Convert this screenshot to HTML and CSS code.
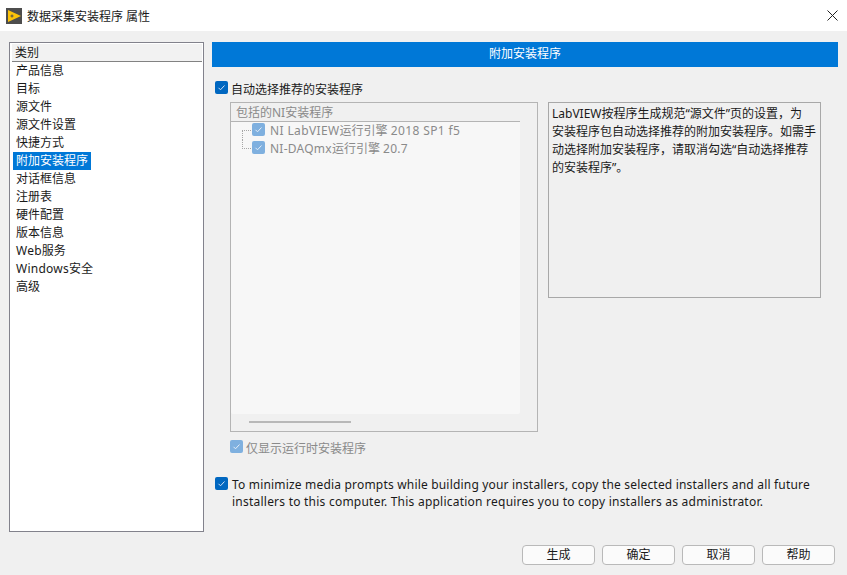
FILE: index.html
```html
<!DOCTYPE html>
<html lang="zh">
<head>
<meta charset="utf-8">
<title>数据采集安装程序 属性</title>
<link rel="stylesheet" href="styles.css">
</head>
<body>
<div class="window">
  <header class="titlebar">
    <svg class="app-icon" viewBox="0 0 16 16"><rect width="16" height="16" fill="#4d4d4d"/><path d="M2 2 L15 8 L2 14 Z" fill="#fcc30a"/><path d="M4.5 8h3M6 6.5v3" stroke="#4d4d4d" stroke-width="1" fill="none"/></svg>
    <span class="title">数据采集安装程序 属性</span>
    <svg class="close" viewBox="0 0 11 11"><path d="M.5 .5L10.5 10.5M10.5 .5L.5 10.5" stroke="#222" stroke-width="1" fill="none"/></svg>
  </header>
  <main class="content">
    <nav class="categories">
      <div class="cat-head">类别</div>
      <ul class="cat-list">
        <li>产品信息</li>
        <li>目标</li>
        <li>源文件</li>
        <li>源文件设置</li>
        <li>快捷方式</li>
        <li><span class="selected">附加安装程序</span></li>
        <li>对话框信息</li>
        <li>注册表</li>
        <li>硬件配置</li>
        <li>版本信息</li>
        <li><span class="lat">Web</span>服务</li>
        <li><span class="lat">Windows</span>安全</li>
        <li>高级</li>
      </ul>
    </nav>
    <section class="panel">
      <h1 class="panel-title">附加安装程序</h1>
      <label class="check auto">
        <span class="box"><svg viewBox="0 0 13 13"><path d="M3.5 6.8l2 2 4-4.3" stroke="#cfe0f5" stroke-width="1" fill="none"/></svg></span>
        <span>自动选择推荐的安装程序</span>
      </label>
      <div class="columns">
        <div class="left-col">
          <div class="tree-box">
            <div class="tree-inner">
              <div class="tree-head">包括的NI安装程序</div>
              <div class="tree-rows">
                <div class="tree-row"><i class="elbow first"></i><span class="box soft"><svg viewBox="0 0 13 13"><path d="M3.5 6.8l2 2 4-4.3" stroke="#e4eef9" stroke-width="1" fill="none"/></svg></span><span><span class="lat wide">NI LabVIEW</span>运行引擎 <span class="lat wide">2018 SP1 f5</span></span></div>
                <div class="tree-row"><i class="elbow last"></i><span class="box soft"><svg viewBox="0 0 13 13"><path d="M3.5 6.8l2 2 4-4.3" stroke="#e4eef9" stroke-width="1" fill="none"/></svg></span><span><span class="lat">NI-DAQmx</span>运行引擎 <span class="lat">20.7</span></span></div>
              </div>
            </div>
            <div class="hscroll"><div class="thumb"></div></div>
          </div>
          <label class="check runtime">
            <span class="box soft"><svg viewBox="0 0 13 13"><path d="M3.5 6.8l2 2 4-4.3" stroke="#e4eef9" stroke-width="1" fill="none"/></svg></span>
            <span>仅显示运行时安装程序</span>
          </label>
        </div>
        <p class="note">LabVIEW按程序生成规范“源文件”页的设置，为<br>安装程序包自动选择推荐的附加安装程序。如需手<br>动选择附加安装程序，请取消勾选“自动选择推荐<br>的安装程序”。</p>
      </div>
      <label class="check media">
        <span class="box"><svg viewBox="0 0 13 13"><path d="M3.5 6.8l2 2 4-4.3" stroke="#cfe0f5" stroke-width="1" fill="none"/></svg></span>
        <span class="media-text">To minimize media prompts while building your installers, copy the selected installers and all future<br><span class="line-two">installers to this computer. This application requires you to copy installers as administrator.</span></span>
      </label>
    </section>
  </main>
  <footer class="actions">
    <button>生成</button>
    <button>确定</button>
    <button>取消</button>
    <button>帮助</button>
  </footer>
</div>
</body>
</html>
```
FILE: styles.css
```css
* { box-sizing: border-box; }
html, body { margin: 0; height: 100%; }
body {
  font-family: "Noto Sans", "Noto Sans CJK SC", sans-serif;
  font-size: 12px;
  color: #1a1a1a;
  background: #f0f0f0;
  overflow: hidden;
}
.lat { letter-spacing: .25px; }
.lat.wide { letter-spacing: .38px; }
.window { width: 847px; height: 575px; display: flex; flex-direction: column; }
.titlebar {
  height: 31px;
  background: #fff;
  display: flex;
  align-items: center;
  padding: 0 9px 0 6px;
  flex: none;
}
.app-icon { width: 16px; height: 16px; margin-right: 5px; }
.title { flex: 1; line-height: 17px; padding-top: 1px; }
.close { width: 11px; height: 11px; }
.content {
  display: flex;
  padding: 11px 9px 0 9px;
  gap: 8px;
  height: 501px;
  flex: none;
}
.categories {
  width: 195px;
  height: 490px;
  background: #fff;
  border: 1px solid #82828c;
  padding: 1px;
}
.cat-head {
  height: 18px;
  line-height: 18px;
  background: #f2f2f2;
  border-bottom: 1px solid #828282;
  padding-left: 3px;
  margin: 0 0 0 1px;
}
.cat-list { list-style: none; margin: 0; padding: 0 0 0 3px; }
.cat-list li { height: 18px; line-height: 18px; padding-left: 2px; }
.selected {
  display: inline-block;
  background: #0078d7;
  color: #fff;
  height: 18px;
  margin-left: -3px;
  padding: 0 3px 0 3px;
  white-space: nowrap;
}
.panel { flex: 1; min-width: 0; }
.panel-title {
  margin: 0;
  height: 25px;
  line-height: 24px;
  background: #0078d7;
  color: #fff;
  font-size: 12px;
  font-weight: 400;
  text-align: center;
}
.check { display: flex; align-items: flex-start; }
.box {
  flex: none;
  width: 13px;
  height: 13px;
  border-radius: 2px;
  background: #0067c0;
  display: block;
}
.box svg { display: block; width: 13px; height: 13px; }
.box.soft { background: #7fb0df; }
.auto { margin: 14px 0 0 3px; gap: 3px; line-height: 18px; height: 21px; }
.columns { display: flex; padding-left: 18px; }
.left-col { width: 308px; flex: none; }
.tree-box {
  height: 330px;
  border: 1px solid #b4b4b4;
  background: #f0f0f0;
  display: flex;
  flex-direction: column;
}
.tree-inner {
  width: 289px;
  height: 311px;
  background: #f7f7f7;
  border-radius: 0 0 2px 2px;
}
.tree-head {
  height: 19px;
  padding: 2px 0 0 5px;
  line-height: 15px;
  color: #8a8a8a;
  border-bottom: 1px solid #b4b4b4;
  background: #f0f0f0;
}
.tree-rows { margin-top: -1px; }
.tree-row {
  display: flex;
  align-items: center;
  height: 18px;
  color: #8a8a8a;
  gap: 5px;
  padding-left: 21px;
  position: relative;
}
.tree-row .box { margin-top: -1px; }
.elbow {
  position: absolute;
  left: 11px;
  width: 9px;
  height: 10px;
  border-left: 1px dotted #a6a6a6;
}
.elbow.first { top: 9px; border-top: 1px dotted #a6a6a6; }
.elbow.last { top: 0; border-bottom: 1px dotted #a6a6a6; }
.hscroll { flex: 1; padding: 7px 0 0 18px; }
.thumb { width: 102px; height: 2px; background: #b8b8b8; }
.runtime { margin-top: 8px; gap: 3px; color: #8a8a8a; line-height: 18px; height: 37px; }
.note {
  margin: 0 0 0 10px;
  width: 273px;
  height: 196px;
  border: 1px solid #a8a8a8;
  padding: 2px 3px;
  line-height: 18px;
  background: #f0f0f0;
  white-space: nowrap;
}
.media { margin: 0 0 0 3px; gap: 4px; line-height: 17px; }
.media-text { margin-top: -1px; white-space: nowrap; letter-spacing: .185px; }
.line-two { letter-spacing: .23px; }
.actions {
  display: flex;
  gap: 7px;
  padding: 13px 0 0 522px;
}
.actions button {
  width: 73px;
  height: 20px;
  padding: 0;
  font: inherit;
  line-height: 18px;
  color: #1a1a1a;
  background: #fbfbfb;
  border: 1px solid #b9b9b9;
  border-radius: 4px;
}
```
